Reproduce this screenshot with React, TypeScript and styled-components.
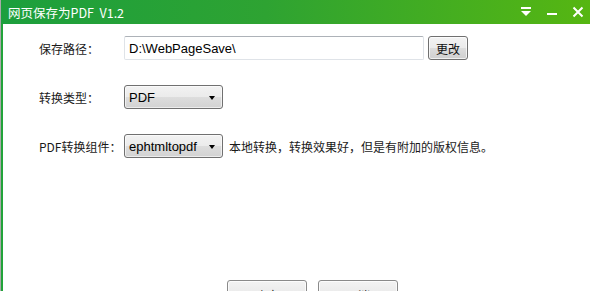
import React from "react";
import styled, { createGlobalStyle } from "styled-components";

const GlobalStyle = createGlobalStyle`
  html, body {
    margin: 0;
    padding: 0;
    background: #ffffff;
  }
  body {
    font-family: "Noto Sans CJK SC", "Liberation Sans", sans-serif;
  }
`;

const Window = styled.div`
  width: 590px;
  height: 291px;
  box-sizing: border-box;
  display: flex;
  flex-direction: column;
  background: #ffffff;
  border-left: 1px solid #a9a9a9;
  overflow: hidden;
`;

const TitleBar = styled.div`
  height: 24px;
  flex-shrink: 0;
  display: flex;
  align-items: center;
  justify-content: space-between;
  padding: 0 6px 0 7px;
  background: linear-gradient(90deg, #1c9f3d 0%, #2ea332 45%, #56b612 100%);
  color: #ffffff;
`;

const Title = styled.div`
  font-family: "Noto Sans CJK SC", sans-serif;
  font-size: 12.5px;
  font-weight: 400;
  white-space: pre;
`;

const Controls = styled.div`
  display: flex;
  align-items: center;
  gap: 14px;
`;

const ControlIcon = styled.svg`
  display: block;
`;

const Body = styled.div`
  flex: 1;
  display: flex;
  border-left: 2px solid #22a33a;
`;

const Content = styled.div`
  flex: 1;
  display: flex;
  flex-direction: column;
  padding: 12px 0 0 36px;
`;

const Row = styled.div<{ $gap?: number }>`
  display: flex;
  align-items: center;
  height: 24px;
  margin-bottom: ${(p) => p.$gap ?? 25}px;
`;

const Label = styled.div`
  width: 85px;
  font-size: 12px;
  color: #1a1a1a;
  white-space: nowrap;
`;

const PathInput = styled.div`
  width: 300px;
  height: 24px;
  box-sizing: border-box;
  border: 1px solid #dfe3e8;
  border-top-color: #adb2b8;
  border-radius: 2px;
  padding: 0 4px;
  display: flex;
  align-items: center;
  font-family: "Liberation Sans", sans-serif;
  font-size: 13px;
  color: #000;
`;

const Button = styled.div<{ $w: number }>`
  width: ${(p) => p.$w}px;
  height: 24px;
  box-sizing: border-box;
  border: 1px solid #707070;
  border-radius: 3px;
  background: linear-gradient(#f3f3f3 0%, #ebebeb 50%, #dddddd 51%, #cfcfcf 100%);
  display: flex;
  align-items: center;
  justify-content: center;
  font-size: 12px;
  color: #111;
  box-shadow: inset 0 0 0 1px rgba(255, 255, 255, 0.7);
`;

const ChangeButton = styled(Button)`
  margin-left: 4px;
`;

const Select = styled.div`
  width: 99px;
  height: 24px;
  box-sizing: border-box;
  border: 1px solid #707070;
  border-radius: 3px;
  background: linear-gradient(#f2f2f2 0%, #ebebeb 50%, #dddddd 51%, #d2d2d2 100%);
  display: flex;
  align-items: center;
  justify-content: space-between;
  padding: 0 7px 0 4px;
  font-family: "Liberation Sans", sans-serif;
  font-size: 13px;
  color: #000;
  box-shadow: inset 0 0 0 1px rgba(255, 255, 255, 0.6);
`;

const Arrow = styled.span`
  width: 0;
  height: 0;
  border-left: 3.5px solid transparent;
  border-right: 3.5px solid transparent;
  border-top: 4px solid #000;
  margin-top: 2px;
`;

const Note = styled.div`
  margin-left: 6px;
  font-size: 12px;
  color: #1a1a1a;
  white-space: nowrap;
`;

const Footer = styled.div`
  display: flex;
  gap: 11px;
  padding-left: 188px;
  margin-top: 122px;
`;

const FooterButton = styled(Button)`
  border-color: #8a8a8a;
  align-items: flex-start;
  padding-top: 6px;
`;

const ComboBox: React.FC<{ value: string }> = ({ value }) => (
  <Select>
    <span>{value}</span>
    <Arrow />
  </Select>
);

export default function App() {
  return (
    <>
      <GlobalStyle />
      <Window>
        <TitleBar>
          <Title>{"网页保存为PDF  V1.2"}</Title>
          <Controls>
            <ControlIcon width="12" height="12" viewBox="0 0 12 12">
              <rect x="1" y="1" width="10" height="2" fill="#fff" />
              <polygon points="1,5 11,5 6,10" fill="#fff" />
            </ControlIcon>
            <ControlIcon width="12" height="12" viewBox="0 0 12 12">
              <rect x="1" y="7" width="10" height="2" fill="#fff" />
            </ControlIcon>
            <ControlIcon width="12" height="12" viewBox="0 0 12 12">
              <path d="M1.5 1.5 L10.5 10.5 M10.5 1.5 L1.5 10.5" stroke="#fff" strokeWidth="2" />
            </ControlIcon>
          </Controls>
        </TitleBar>
        <Body>
          <Content>
            <Row>
              <Label>保存路径：</Label>
              <PathInput>D:\WebPageSave\</PathInput>
              <ChangeButton $w={40}>更改</ChangeButton>
            </Row>
            <Row>
              <Label>转换类型：</Label>
              <ComboBox value="PDF" />
            </Row>
            <Row $gap={0}>
              <Label>PDF转换组件：</Label>
              <ComboBox value="ephtmltopdf" />
              <Note>本地转换，转换效果好，但是有附加的版权信息。</Note>
            </Row>
            <Footer>
              <FooterButton $w={80}>确定</FooterButton>
              <FooterButton $w={80}>取消</FooterButton>
            </Footer>
          </Content>
        </Body>
      </Window>
    </>
  );
}
